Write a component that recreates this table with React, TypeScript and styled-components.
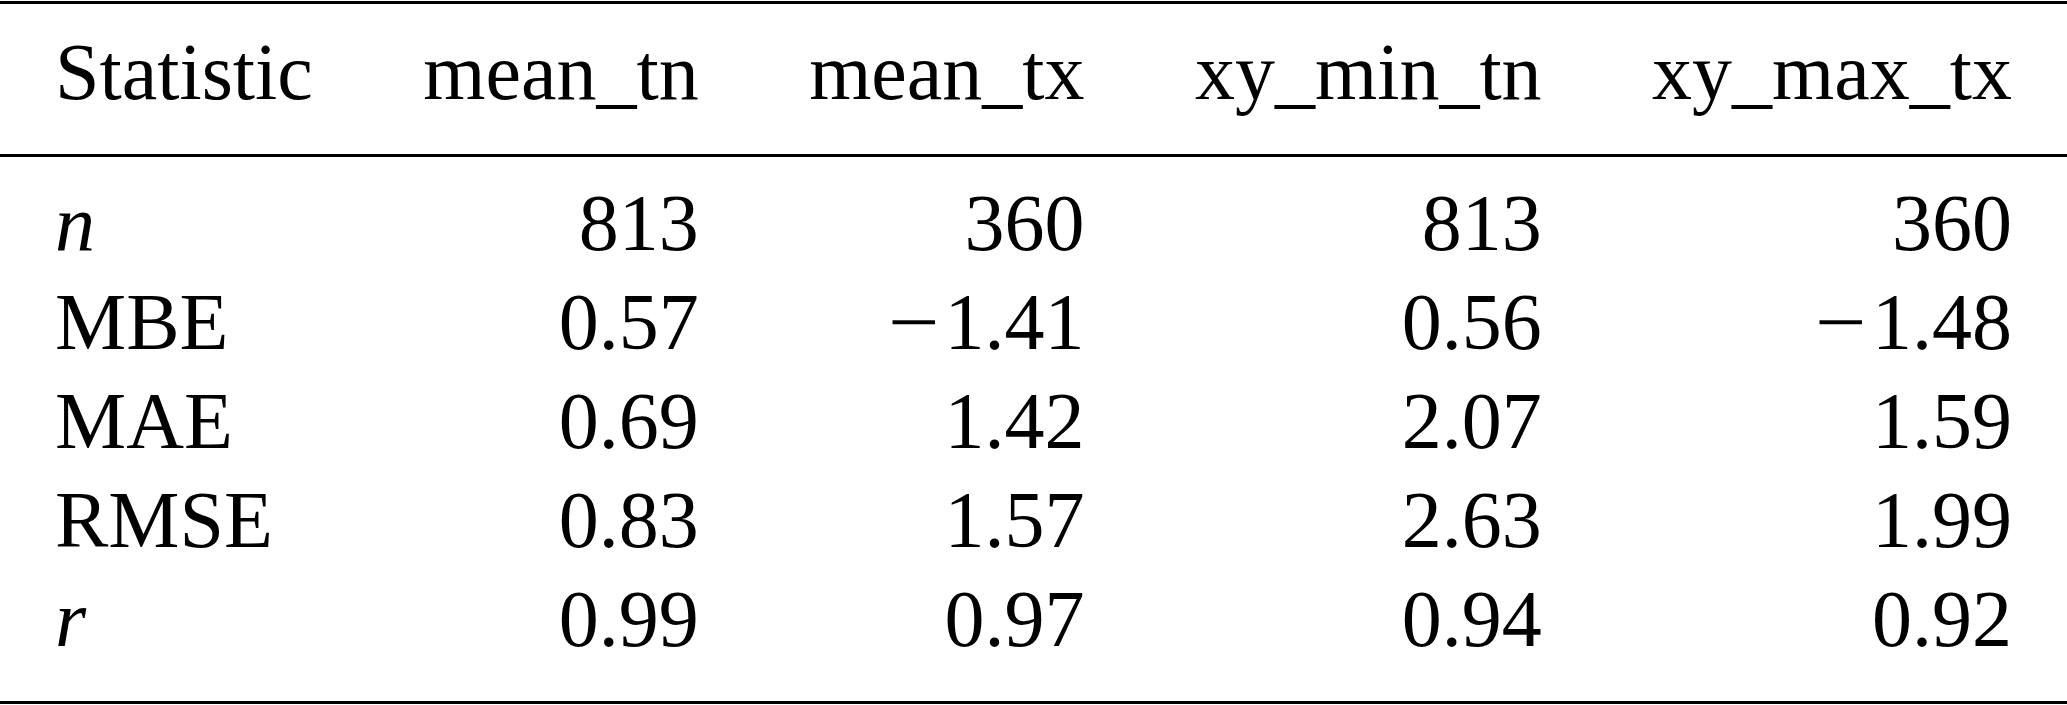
import React from "react";
import styled, { createGlobalStyle } from "styled-components";

const Global = createGlobalStyle`
  html, body {
    margin: 0;
    padding: 0;
    background: #ffffff;
  }
  body {
    font-family: "Liberation Serif", "Times New Roman", serif;
    color: #000000;
  }
`;

const Page = styled.div`
  width: 2067px;
  padding-top: 1px;
`;

const Table = styled.table`
  width: 2067px;
  border-collapse: separate;
  border-spacing: 0;
  font-family: "Liberation Serif", "Times New Roman", serif;
  font-size: 80px;
  line-height: 99px;
  color: #000;
`;

const HeadCell = styled.th<{ $left?: boolean }>`
  font-weight: normal;
  text-align: ${(p) => (p.$left ? "left" : "right")};
  padding: 18.5px 55px 32.5px;
  border-top: 3px solid #000;
  border-bottom: 3px solid #000;
  white-space: nowrap;
  height: 99px;
  box-sizing: content-box;
`;

const Cell = styled.td<{ $left?: boolean; $first?: boolean; $last?: boolean }>`
  text-align: ${(p) => (p.$left ? "left" : "right")};
  padding: ${(p) => (p.$first ? "16.5px" : "0")} 55px
    ${(p) => (p.$last ? "32.5px" : "0")};
  border-bottom: ${(p) => (p.$last ? "3.5px solid #000" : "none")};
  white-space: nowrap;
  height: 99px;
  box-sizing: content-box;
`;

const MathVar = styled.i`
  font-style: italic;
`;

const Minus = styled.span`
  display: inline-block;
  width: 0.71em;
  text-align: left;
  transform: scaleX(1.14);
  transform-origin: left center;
`;

type Row = { label: React.ReactNode; values: string[] };

const rows: Row[] = [
  { label: <MathVar>n</MathVar>, values: ["813", "360", "813", "360"] },
  { label: "MBE", values: ["0.57", "-1.41", "0.56", "-1.48"] },
  { label: "MAE", values: ["0.69", "1.42", "2.07", "1.59"] },
  { label: "RMSE", values: ["0.83", "1.57", "2.63", "1.99"] },
  { label: <MathVar>r</MathVar>, values: ["0.99", "0.97", "0.94", "0.92"] },
];

const headers = ["mean_tn", "mean_tx", "xy_min_tn", "xy_max_tx"];

function Num({ v }: { v: string }) {
  if (v.startsWith("-")) {
    return (
      <>
        <Minus>{"\u2212"}</Minus>
        {v.slice(1)}
      </>
    );
  }
  return <>{v}</>;
}

export default function App() {
  return (
    <Page>
      <Global />
      <Table>
        <thead>
          <tr>
            <HeadCell $left>Statistic</HeadCell>
            {headers.map((h) => (
              <HeadCell key={h}>{h}</HeadCell>
            ))}
          </tr>
        </thead>
        <tbody>
          {rows.map((r, i) => (
            <tr key={i}>
              <Cell $left $first={i === 0} $last={i === rows.length - 1}>
                {r.label}
              </Cell>
              {r.values.map((v, j) => (
                <Cell key={j} $first={i === 0} $last={i === rows.length - 1}>
                  <Num v={v} />
                </Cell>
              ))}
            </tr>
          ))}
        </tbody>
      </Table>
    </Page>
  );
}
